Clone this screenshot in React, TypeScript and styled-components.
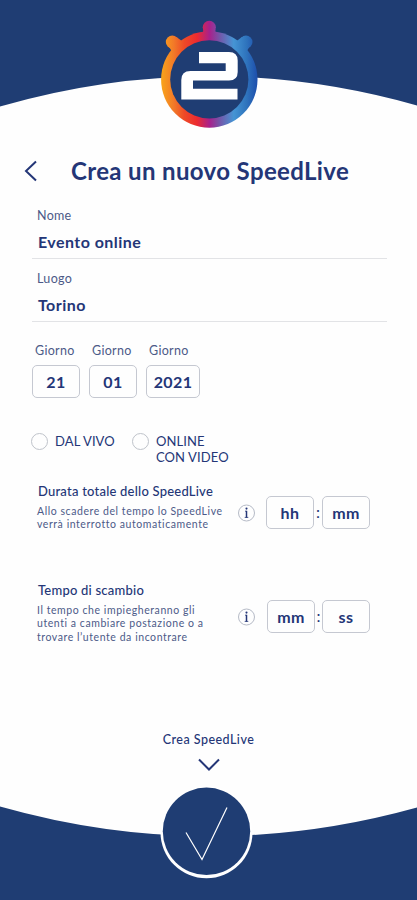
import React from "react";
import styled, { createGlobalStyle } from "styled-components";

const BLUE = "#1f3d73";
const INK = "#243677";

const GlobalStyle = createGlobalStyle`
  *, *::before, *::after { box-sizing: border-box; }
  body { margin: 0; background: #fefefe; }
`;

const Screen = styled.main`
  width: 417px;
  height: 900px;
  display: flex;
  flex-direction: column;
  background: #fefefe;
  color: ${INK};
  font-family: Lato, "Open Sans", sans-serif;
  overflow: hidden;
`;

const Banner = styled.svg`
  display: block;
  flex: none;
`;

const TitleRow = styled.header`
  display: flex;
  align-items: center;
  height: 36px;
  margin-top: 13px;
  padding-left: 24px;
`;

const BackButton = styled.button`
  display: flex;
  width: 14px;
  height: 24px;
  padding: 0;
  border: 0;
  background: none;
`;

const Title = styled.h1`
  margin: -1px 0 0 33px;
  font-size: 24px;
  line-height: 36px;
  font-weight: 700;
  letter-spacing: 0.36px;
  white-space: nowrap;
`;

const Fields = styled.div`
  margin: 7px 30px 0 32px;
`;

const Field = styled.div`
  display: flex;
  flex-direction: column;
  height: 63px;
  padding-left: 6px;
  border-bottom: 1px solid #e2e3e6;
`;

const Label = styled.span`
  font-size: 12.5px;
  line-height: 16px;
  letter-spacing: 0.3px;
  color: #4c5a88;
  white-space: nowrap;
`;

const FieldLabel = styled(Label)`
  margin-top: 12px;
  margin-left: -1px;
`;

const Value = styled.span`
  margin-top: 8px;
  font-size: 16px;
  line-height: 20px;
  font-weight: 700;
  letter-spacing: 0.45px;
`;

const DateRow = styled.div`
  display: flex;
  gap: 9px;
  height: 98px;
  padding: 21px 0 0 32px;
`;

const DatePart = styled.div`
  display: flex;
  flex-direction: column;
  gap: 6px;

  ${Label} { padding-left: 3px; }
`;

const Box = styled.div<{ $w?: number }>`
  display: flex;
  align-items: center;
  justify-content: center;
  width: ${(p) => p.$w ?? 48}px;
  height: 33px;
  border: 1px solid #c5c8d1;
  border-radius: 5px;
  font-size: 16px;
  font-weight: 700;
  letter-spacing: 0.4px;
`;

const Modes = styled.div`
  display: flex;
  height: 62px;
  padding: 13px 0 0 31px;
`;

const Mode = styled.label<{ $w: number; $gap: number }>`
  display: flex;
  align-items: flex-start;
  gap: ${(p) => p.$gap}px;
  width: ${(p) => p.$w}px;
  font-size: 13px;
  line-height: 16px;
  letter-spacing: 0.1px;
  white-space: nowrap;
`;

const Radio = styled.span`
  flex: none;
  width: 17px;
  height: 17px;
  border: 1px solid #bfc3ca;
  border-radius: 50%;
`;

const Duration = styled.section<{ $h: number }>`
  display: flex;
  height: ${(p) => p.$h}px;
  padding-left: 37px;
`;

const Copy = styled.div`
  width: 201px;
`;

const Heading = styled.h2`
  margin: 0 0 0 1px;
  font-size: 13px;
  line-height: 18px;
  font-weight: 500;
  letter-spacing: 0.22px;
  white-space: nowrap;
`;

const Help = styled.p`
  margin: 5px 0 0;
  font-size: 10.5px;
  line-height: 13.3px;
  letter-spacing: 0.56px;
  color: #4c5a88;
  white-space: nowrap;
`;

const Controls = styled.div<{ $gap: number; $top: number }>`
  display: flex;
  align-items: center;
  height: 33px;
  margin-top: ${(p) => p.$top}px;

  svg { margin-right: ${(p) => p.$gap}px; }
`;

const Colon = styled.span<{ $w: number }>`
  width: ${(p) => p.$w}px;
  padding-bottom: 2px;
  text-align: center;
  font-size: 16px;
`;

const Submit = styled.footer`
  display: flex;
  flex-direction: column;
  align-items: center;
  margin-top: auto;
  height: 169px;
`;

const SubmitLabel = styled.span`
  font-size: 12.5px;
  line-height: 18px;
  font-weight: 500;
  letter-spacing: 0.47px;
`;

const DownChevron = styled.svg`
  flex: none;
  margin: 9px 0 4px;
`;

const InfoIcon = () => (
  <svg width="17" height="18" viewBox="0 0 17 18" fill="none">
    <circle cx="8.5" cy="9" r="8" stroke="#adb2bf" strokeWidth=".9" />
    <path d="M7 7.200h1.500M6.700 13.400h3.600" stroke={INK} strokeWidth=".8" />
    <path d="M8.500 6.800v6.900" stroke={INK} strokeWidth="1.500" />
    <circle cx="8.500" cy="4.600" r="1.050" fill={INK} />
  </svg>
);

const TopBanner = () => (
  <Banner width="417" height="140" viewBox="0 0 417 140">
    <defs>
      <linearGradient id="rim" gradientUnits="userSpaceOnUse" x1="161" y1="0" x2="258" y2="0">
        <stop offset="0" stopColor="#f9a51a" />
        <stop offset=".13" stopColor="#f27a28" />
        <stop offset=".24" stopColor="#ee4a27" />
        <stop offset=".37" stopColor="#ec2b2f" />
        <stop offset=".5" stopColor="#a9208c" />
        <stop offset=".6" stopColor="#7654a8" />
        <stop offset=".75" stopColor="#4595d4" />
        <stop offset=".88" stopColor="#2f74bd" />
        <stop offset="1" stopColor="#1c4cab" />
      </linearGradient>
    </defs>
    <path d="M0 0H417V105.500Q208.500 46.500 0 106.500Z" fill={BLUE} />
    <g fill="url(#rim)">
      <circle cx="209.300" cy="79.500" r="48.200" />
      <circle cx="209.300" cy="27.300" r="6.600" />
      <path d="M203.500 29h11.700l.8 7h-13.500z" />
      <circle cx="172.300" cy="42" r="6.500" />
      <path d="M176.500 37l8 6-11 11-5-8z" />
      <circle cx="246" cy="42" r="6.500" />
      <path d="M242 37l-8 6 11 11 5-8z" />
    </g>
    <circle cx="209.300" cy="79.400" r="39.100" fill={BLUE} />
    <path
      d="M199 52H229Q237.700 52 237.700 60.500V72Q237.700 80.500 229 80.500H193V88.700H237.500V99.500H181.300V80Q181.300 71 190.500 71H225.700V63.300H199Z"
      fill="#fff"
    />
  </Banner>
);

const BottomBanner = () => (
  <Banner width="417" height="124" viewBox="0 776 417 124" fill="none">
    <path d="M0 806.500Q208.500 865.500 417 807.500V900H0Z" fill={BLUE} />
    <circle cx="206.500" cy="832.300" r="46" fill="#fff" />
    <circle cx="206.500" cy="831.300" r="43.700" fill={BLUE} />
    <path d="M186 832.500L202 859.500L227 807.500" stroke="#fff" strokeWidth="1.200" />
  </Banner>
);

export default function App() {
  return (
    <>
      <GlobalStyle />
      <Screen>
        <TopBanner />
        <TitleRow>
          <BackButton aria-label="Indietro">
            <svg width="14" height="24" viewBox="0 0 14 24" fill="none">
              <path d="M12 2.500L2 12l10 9.500" stroke={INK} strokeWidth="2" />
            </svg>
          </BackButton>
          <Title>Crea un nuovo SpeedLive</Title>
        </TitleRow>
        <Fields>
          <Field><FieldLabel>Nome</FieldLabel><Value>Evento online</Value></Field>
          <Field><FieldLabel>Luogo</FieldLabel><Value>Torino</Value></Field>
        </Fields>
        <DateRow>
          <DatePart><Label>Giorno</Label><Box>21</Box></DatePart>
          <DatePart><Label>Giorno</Label><Box>01</Box></DatePart>
          <DatePart><Label>Giorno</Label><Box $w={54}>2021</Box></DatePart>
        </DateRow>
        <Modes>
          <Mode $w={101} $gap={7}><Radio />DAL VIVO</Mode>
          <Mode $w={110} $gap={7}><Radio /><span>ONLINE<br />CON VIDEO</span></Mode>
        </Modes>
        <Duration $h={99}>
          <Copy>
            <Heading>Durata totale dello SpeedLive</Heading>
            <Help>Allo scadere del tempo lo SpeedLive<br />verrà interrotto automaticamente</Help>
          </Copy>
          <Controls $gap={11} $top={14}>
            <InfoIcon /><Box>hh</Box><Colon $w={8}>:</Colon><Box>mm</Box>
          </Controls>
        </Duration>
        <Duration $h={80}>
          <Copy>
            <Heading>Tempo di scambio</Heading>
            <Help>Il tempo che impiegheranno gli<br />utenti a cambiare postazione o a<br />trovare l’utente da incontrare</Help>
          </Copy>
          <Controls $gap={12} $top={19}>
            <InfoIcon /><Box>mm</Box><Colon $w={7}>:</Colon><Box>ss</Box>
          </Controls>
        </Duration>
        <Submit>
          <SubmitLabel>Crea SpeedLive</SubmitLabel>
          <DownChevron width="24" height="14" viewBox="0 0 24 14" fill="none">
            <path d="M2 1.500L12 11.500l10-10" stroke={INK} strokeWidth="2" />
          </DownChevron>
          <BottomBanner />
        </Submit>
      </Screen>
    </>
  );
}
